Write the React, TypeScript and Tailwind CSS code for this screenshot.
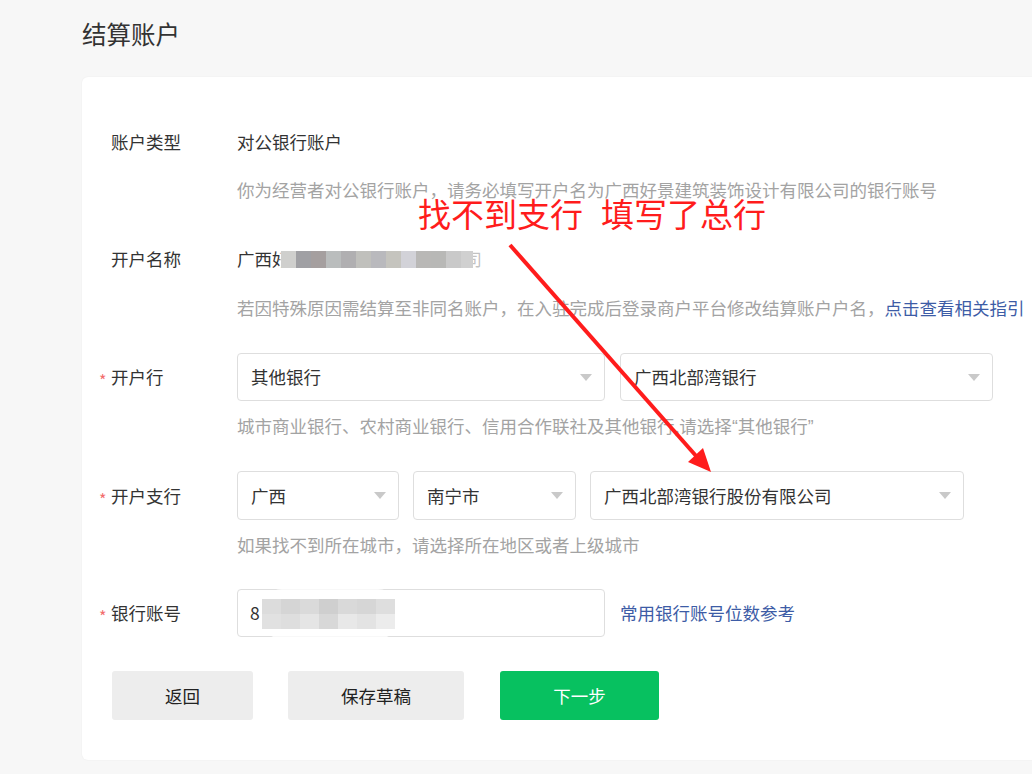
import React from "react";

const Caret = () => (
  <svg width="12" height="7" viewBox="0 0 12 7" className="shrink-0">
    <path d="M0 0 L12 0 L6 7 Z" fill="#c9c9c9" />
  </svg>
);

const Select = ({ value, w }: { value: string; w: string }) => (
  <div
    className={`${w} h-full flex items-center justify-between pl-[13px] pr-[12px] border border-[#dedede] rounded-[4px] bg-white text-[#333]`}
  >
    <span>{value}</span>
    <Caret />
  </div>
);

const Label = ({ text, star, h }: { text: string; star?: boolean; h: string }) => (
  <div className={`flex items-center ${h} text-[#333]`}>
    {star && (
      <span className="-ml-[12px] w-[12px] text-[#f26d6d] text-[16px] leading-none pt-[6px]">*</span>
    )}
    <span>{text}</span>
  </div>
);

export default function App() {
  return (
    <div className="relative w-[1032px] h-[774px] overflow-hidden bg-[#f7f7f7] font-['Microsoft_YaHei','Noto_Sans_CJK_SC',sans-serif] text-[17.5px] leading-6">
      <div className="pl-[82px] pt-[19px]">
        <h1 className="text-[24.5px] leading-[30px] text-[#333] font-normal">结算账户</h1>
      </div>

      <div className="ml-[82px] mt-[28px] w-[1000px] bg-white rounded-[6px] shadow-[0_0_2px_rgba(0,0,0,0.06)] pt-[53px] pb-[40px] pl-[29px]">
        {/* 账户类型 */}
        <div className="grid grid-cols-[126px_1fr]">
          <Label text="账户类型" h="h-6" />
          <div>
            <div className="text-[#333]">对公银行账户</div>
            <div className="mt-[24px] text-[#a3a3a3] whitespace-nowrap">
              你为经营者对公银行账户，请务必填写开户名为广西好景建筑装饰设计有限公司的银行账号
            </div>
          </div>
        </div>

        {/* 开户名称 */}
        <div className="grid grid-cols-[126px_1fr] mt-[45px]">
          <Label text="开户名称" h="h-6" />
          <div>
            <div className="relative text-[#333] w-max">
              广西好景建筑装饰设计有限公司
              <div className="absolute left-[43px] top-[-6px] w-[202px] h-[36px] rounded-[14px] bg-white/70 flex items-center px-[1px]">
                <div className="flex h-[17px]">
                  <div className="w-[15px] bg-[#cfcfcd]" />
                  <div className="w-[15px] bg-[#a0a0a4]" />
                  <div className="w-[15px] bg-[#a59f9f]" />
                  <div className="w-[15px] bg-[#babdbd]" />
                  <div className="w-[15px] bg-[#b0afb1]" />
                  <div className="w-[15px] bg-[#c0c0bc]" />
                  <div className="w-[15px] bg-[#b9b9bd]" />
                  <div className="w-[15px] bg-[#c5c4be]" />
                  <div className="w-[15px] bg-[#d2d2d8]" />
                  <div className="w-[15px] bg-[#b9b8b6]" />
                  <div className="w-[15px] bg-[#b8b8b6]" />
                  <div className="w-[15px] bg-[#c9c9c9]" />
                  <div className="w-[12px] bg-[#d0d0d0]" />
                </div>
              </div>
            </div>
            <div className="mt-[25px] text-[#a3a3a3] whitespace-nowrap">
              若因特殊原因需结算至非同名账户，在入驻完成后登录商户平台修改结算账户户名，
              <span className="text-[#3d5ca6]">点击查看相关指引</span>
            </div>
          </div>
        </div>

        {/* 开户行 */}
        <div className="grid grid-cols-[126px_1fr] mt-[33px]">
          <Label text="开户行" star h="h-[48px]" />
          <div>
            <div className="flex gap-[15px] h-[48px]">
              <Select value="其他银行" w="w-[368px]" />
              <Select value="广西北部湾银行" w="w-[373px]" />
            </div>
            <div className="mt-[13px] text-[#a3a3a3] whitespace-nowrap">
              城市商业银行、农村商业银行、信用合作联社及其他银行,请选择
              <span className="font-['Liberation_Sans']">“</span>其他银行
              <span className="font-['Liberation_Sans']">”</span>
            </div>
          </div>
        </div>

        {/* 开户支行 */}
        <div className="grid grid-cols-[126px_1fr] mt-[32px]">
          <Label text="开户支行" star h="h-[49px]" />
          <div>
            <div className="flex gap-[14px] h-[49px]">
              <Select value="广西" w="w-[162px]" />
              <Select value="南宁市" w="w-[163px]" />
              <Select value="广西北部湾银行股份有限公司" w="w-[374px]" />
            </div>
            <div className="mt-[13px] text-[#a3a3a3] whitespace-nowrap">
              如果找不到所在城市，请选择所在地区或者上级城市
            </div>
          </div>
        </div>

        {/* 银行账号 */}
        <div className="grid grid-cols-[126px_1fr] mt-[32px]">
          <Label text="银行账号" star h="h-[48px]" />
          <div className="flex items-center gap-[15px]">
            <div className="relative w-[368px] h-[48px] border border-[#dedede] rounded-[4px] flex items-center pl-[12px] text-[#333]">
              8
              <div className="absolute left-[22px] top-[-1px] w-[140px] h-[50px] rounded-[22px] bg-white/80 flex items-center pl-[2px]">
                <div className="flex flex-col">
                  <div className="flex h-[15px]">
                    <div className="w-[19px] bg-[#dcdcdc]" />
                    <div className="w-[19px] bg-[#d5d5d5]" />
                    <div className="w-[19px] bg-[#dadada]" />
                    <div className="w-[19px] bg-[#cfcfcf]" />
                    <div className="w-[19px] bg-[#d9d9d9]" />
                    <div className="w-[19px] bg-[#d6d6d6]" />
                    <div className="w-[19px] bg-[#dedede]" />
                  </div>
                  <div className="flex h-[15px]">
                    <div className="w-[19px] bg-[#e1e1e1]" />
                    <div className="w-[19px] bg-[#dedede]" />
                    <div className="w-[19px] bg-[#e5e5e5]" />
                    <div className="w-[19px] bg-[#d8d8d8]" />
                    <div className="w-[19px] bg-[#e8e8e8]" />
                    <div className="w-[19px] bg-[#e3e3e3]" />
                    <div className="w-[19px] bg-[#ececec]" />
                  </div>
                </div>
              </div>
            </div>
            <span className="text-[#3d5ca6]">常用银行账号位数参考</span>
          </div>
        </div>

        {/* Buttons */}
        <div className="flex mt-[34px] pl-[1px] h-[49px]">
          <button className="w-[141px] h-full bg-[#ededed] rounded-[3px] text-[#222]">返回</button>
          <button className="ml-[35px] w-[176px] h-full bg-[#ededed] rounded-[3px] text-[#222]">保存草稿</button>
          <button className="ml-[36px] w-[159px] h-full bg-[#07c160] rounded-[3px] text-white">下一步</button>
        </div>
      </div>

      {/* Annotation overlay */}
      <div className="absolute left-[418px] top-[193px] text-[33px] leading-[40px] text-[#ff1c1c] whitespace-nowrap">
        <span>找不到支行</span>
        <span className="ml-[18px]">填写了总行</span>
      </div>
      <svg className="absolute left-0 top-0 pointer-events-none" width="1032" height="774">
        <line x1="510" y1="245" x2="697" y2="457" stroke="#ff1c1c" strokeWidth="4" />
        <polygon points="711,472 688,462 703,448" fill="#ff1c1c" />
      </svg>
    </div>
  );
}
